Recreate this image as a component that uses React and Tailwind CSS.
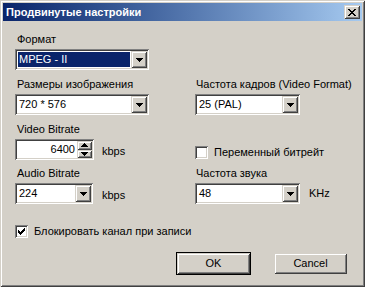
const SUNKEN =
  "shadow-[inset_1px_1px_0_#808080,inset_-1px_-1px_0_#ffffff,inset_2px_2px_0_#404040,inset_-2px_-2px_0_#d4d0c8]";
const RAISED =
  "shadow-[inset_1px_1px_0_#d4d0c8,inset_-1px_-1px_0_#404040,inset_2px_2px_0_#ffffff,inset_-2px_-2px_0_#808080]";

function Arrow({ up }) {
  return (
    <svg width="7" height="4" viewBox="0 0 7 4" shapeRendering="crispEdges">
      {up ? (
        <path d="M3 0h1v1h1v1h1v1h1v1H0V3h1V2h1V1h1z" fill="#000" />
      ) : (
        <path d="M0 0h7v1H6v1H5v1H4v1H3V3H2V2H1V1H0z" fill="#000" />
      )}
    </svg>
  );
}

function DropBtn() {
  return (
    <div className={`w-[16px] h-full flex items-center justify-center bg-[#d4d0c8] ${RAISED}`}>
      <Arrow />
    </div>
  );
}

function Combo({ value, className, selected }) {
  return (
    <div className={`flex h-[21px] bg-white p-[2px] ${SUNKEN} ${className}`}>
      <div className="flex-1 flex p-[1px]">
        <div
          className={`flex-1 flex items-center pl-[1px] ${
            selected ? "bg-[#0a246a] text-white" : "text-black"
          }`}
        >
          {value}
        </div>
      </div>
      <DropBtn />
    </div>
  );
}

function Spin({ value }) {
  return (
    <div className={`flex h-[21px] w-[79px] bg-white p-[2px] ${SUNKEN}`}>
      <div className="flex-1 flex items-center justify-end pr-[2px]">{value}</div>
      <div className="w-[15px] flex flex-col">
        <div className={`flex-1 flex items-center justify-center bg-[#d4d0c8] ${RAISED}`}>
          <Arrow up />
        </div>
        <div className={`flex-1 flex items-center justify-center bg-[#d4d0c8] ${RAISED}`}>
          <Arrow />
        </div>
      </div>
    </div>
  );
}

function Check({ checked, label }) {
  return (
    <div className="flex items-center gap-[6px]">
      <div className={`w-[13px] h-[13px] bg-white flex items-center justify-center ${SUNKEN}`}>
        {checked && (
          <svg width="7" height="7" viewBox="0 0 7 7" shapeRendering="crispEdges">
            <path
              d="M6 0h1v3H6v1H5v1H4v1H3v1H2V6H1V5H0V2h1v1h1v1h1V3h1V2h1V1h1z"
              fill="#000"
            />
          </svg>
        )}
      </div>
      <span>{label}</span>
    </div>
  );
}

function Button({ children, isDefault }) {
  return (
    <div className={isDefault ? "border border-black" : "border border-transparent"}>
      <div
        className={`w-[73px] h-[21px] flex items-center justify-center bg-[#d4d0c8] ${RAISED}`}
      >
        {children}
      </div>
    </div>
  );
}

export default function App() {
  return (
    <div className="w-[365px] h-[287px] bg-[#d4d0c8] font-['Liberation_Sans',Arial,sans-serif] text-[11px] leading-[13px] text-black">
      <div className={`w-full h-full p-[3px] flex flex-col ${RAISED}`}>
        {/* title bar */}
        <div className="h-[18px] flex items-center justify-between bg-gradient-to-r from-[#0a246a] to-[#a6caf0] pl-[3px] pr-[2px]">
          <span className="text-white font-bold text-[11px]">Продвинутые настройки</span>
          <div className={`w-[16px] h-[14px] bg-[#d4d0c8] flex items-center justify-center ${RAISED}`}>
            <svg width="8" height="7" viewBox="0 0 8 7" shapeRendering="crispEdges">
              <path
                d="M0 0h2v1h1v1h2V1h1V0h2v1H7v1H6v1H5v1h1v1h1v1h1v1H6V6H5V5H3v1H2v1H0V6h1V5h1V4h1V3H2V2H1V1H0z"
                fill="#000"
              />
            </svg>
          </div>
        </div>

        {/* body */}
        <div className="flex flex-col pl-[12px] pt-[12px]">
          <div className="h-[13px] pl-[2px]">Формат</div>
          <Combo value="MPEG - II" selected className="w-[134px] mt-[3px]" />

          <div className="flex mt-[8px]">
            <div className="w-[180px]">
              <div className="h-[13px] pl-[2px]">Размеры изображения</div>
              <Combo value="720 * 576" className="w-[134px] mt-[3px]" />
            </div>
            <div>
              <div className="h-[13px] pl-[1px]">Частота кадров (Video Format)</div>
              <Combo value="25 (PAL)" className="w-[105px] mt-[3px]" />
            </div>
          </div>

          <div className="flex mt-[8px]">
            <div className="w-[180px]">
              <div className="h-[13px] pl-[2px]">Video Bitrate</div>
              <div className="flex items-center mt-[3px]">
                <Spin value="6400" />
                <span className="ml-[8px] mt-[4px]">kbps</span>
              </div>
            </div>
            <div className="pt-[23px]">
              <Check label="Переменный битрейт" />
            </div>
          </div>

          <div className="flex mt-[7px]">
            <div className="w-[180px]">
              <div className="h-[13px] pl-[2px]">Audio Bitrate</div>
              <div className="flex items-center mt-[3px]">
                <Combo value="224" className="w-[78px]" />
                <span className="ml-[9px] mt-[4px]">kbps</span>
              </div>
            </div>
            <div>
              <div className="h-[13px] pl-[1px]">Частота звука</div>
              <div className="flex items-center mt-[3px]">
                <Combo value="48" className="w-[105px]" />
                <span className="ml-[9px]">KHz</span>
              </div>
            </div>
          </div>

          <div className="mt-[21px]">
            <Check checked label="Блокировать канал при записи" />
          </div>

          <div className="flex gap-[22px] mt-[14px] pl-[161px]">
            <Button isDefault>OK</Button>
            <Button>Cancel</Button>
          </div>
        </div>
      </div>
    </div>
  );
}
